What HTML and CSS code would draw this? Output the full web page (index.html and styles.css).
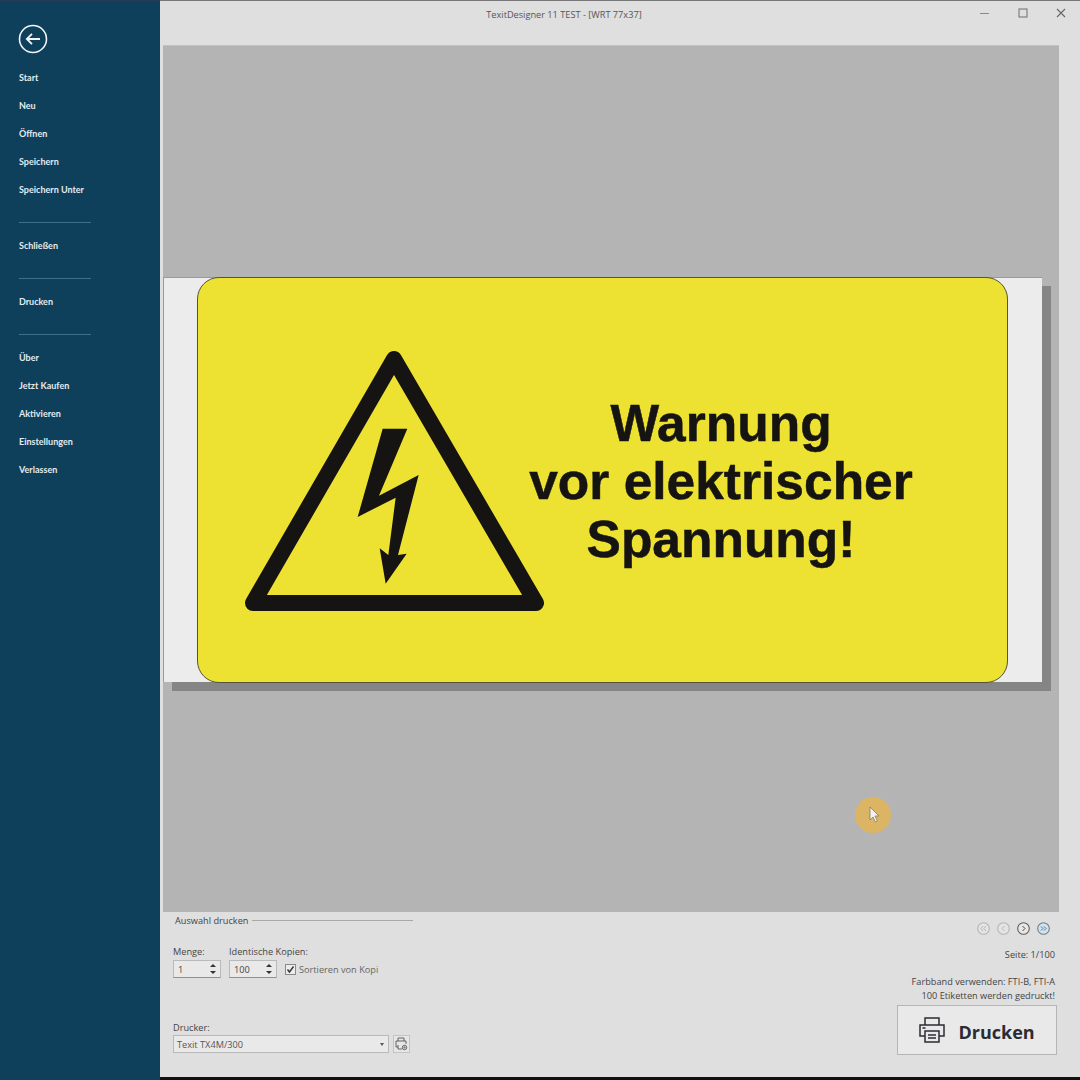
FILE: index.html
```html
<!DOCTYPE html>
<html lang="de">
<head>
<meta charset="utf-8">
<title>TextDesigner 11 TEST</title>
<link rel="stylesheet" href="styles.css">
</head>
<body>
<div class="app">
  <aside class="sidebar">
    <div class="back">
      <svg class="back-icon" width="30" height="30" viewBox="0 0 30 30"><circle cx="15" cy="15" r="13.5" fill="none" stroke="#f2f6f8" stroke-width="1.6"/><path d="M22 15H9M14 9.8 8.8 15l5.2 5.2" fill="none" stroke="#f2f6f8" stroke-width="1.8"/></svg>
    </div>
    <nav class="menu">
      <a class="item">Start</a>
      <a class="item">Neu</a>
      <a class="item">Öffnen</a>
      <a class="item">Speichern</a>
      <a class="item">Speichern Unter</a>
      <div class="sep"></div>
      <a class="item">Schließen</a>
      <div class="sep"></div>
      <a class="item">Drucken</a>
      <div class="sep"></div>
      <a class="item">Über</a>
      <a class="item">Jetzt Kaufen</a>
      <a class="item">Aktivieren</a>
      <a class="item">Einstellungen</a>
      <a class="item">Verlassen</a>
    </nav>
  </aside>
  <main class="main">
    <header class="titlebar">
      <div class="title">TexitDesigner 11 TEST - [WRT 77x37]</div>
      <div class="winbtns">
        <svg width="10" height="10" viewBox="0 0 10 10"><path d="M0 5.5h9" stroke="#8b8b8b" stroke-width="1"/></svg>
        <svg width="10" height="10" viewBox="0 0 10 10"><rect x="1" y="1" width="8" height="8" fill="none" stroke="#6f6f6f" stroke-width="1"/></svg>
        <svg width="10" height="10" viewBox="0 0 10 10"><path d="M1 1l8 8M9 1l-8 8" stroke="#666" stroke-width="1.1"/></svg>
      </div>
    </header>
    <section class="preview">
      <div class="label">
        <div class="sign">
          <svg class="triangle" width="330" height="290" viewBox="0 0 990 870">
            <path d="M492 57 918 789H69Z" fill="none" stroke="#151412" stroke-width="48" stroke-linejoin="round"/>
            <path d="M458 266H532L447 467 566 405 504 645 530 641 467 731 449 625 475 645 497 473 383 531Z" fill="#151412"/>
          </svg>
          <div class="warning">Warnung<br>vor elektrischer<br>Spannung!</div>
        </div>
      </div>
      <div class="cursor-mark">
        <svg width="12" height="18" viewBox="0 0 12 18"><path d="M1 1v13l3-3 2.4 5 2-1-2.4-5h4Z" fill="#f4f2ee" stroke="#77705f" stroke-width=".7"/></svg>
      </div>
    </section>
    <section class="panel">
      <div class="panel-left">
        <div class="legend"><span>Auswahl drucken</span><i class="legend-line"></i></div>
        <div class="fields">
          <div class="field">
            <label class="cap">Menge:</label>
            <div class="spin"><span>1</span><b class="arrows"><i class="up"></i><i class="down"></i></b></div>
          </div>
          <div class="field">
            <label class="cap">Identische Kopien:</label>
            <div class="spin"><span>100</span><b class="arrows"><i class="up"></i><i class="down"></i></b></div>
          </div>
          <div class="check">
            <svg width="11" height="11" viewBox="0 0 11 11"><rect x=".5" y=".5" width="10" height="10" fill="#ececec" stroke="#8a8a8a"/><path d="M2.5 5.5 4.5 8 8.5 2.5" fill="none" stroke="#333" stroke-width="1.4"/></svg>
            <span>Sortieren von Kopi</span>
          </div>
        </div>
        <div class="printer">
          <label class="cap">Drucker:</label>
          <div class="printer-row">
            <div class="select"><span>Texit TX4M/300</span><i class="caret"></i></div>
            <div class="printer-btn">
              <svg width="13" height="14" viewBox="0 0 13 14" fill="none" stroke="#555" stroke-width=".9"><path d="M3 4V1h6v3M3 10H1V4h10v3"/><path d="M3 8v4h4"/><circle cx="9.5" cy="10.5" r="2.2"/><circle cx="9.5" cy="10.5" r=".6"/></svg>
            </div>
          </div>
        </div>
      </div>
      <div class="panel-right">
        <div class="pager">
          <svg width="13" height="13" viewBox="0 0 13 13"><circle cx="6.5" cy="6.5" r="5.8" fill="#e4e4e4" stroke="#b5b5b5" stroke-width="1.1"/><path d="M6 4 3.8 6.5 6 9M9 4 6.8 6.5 9 9" fill="none" stroke="#b5b5b5"/></svg>
          <svg width="13" height="13" viewBox="0 0 13 13"><circle cx="6.5" cy="6.5" r="5.8" fill="#e4e4e4" stroke="#b5b5b5" stroke-width="1.1"/><path d="M7.5 4 5 6.5 7.5 9" fill="none" stroke="#b5b5b5"/></svg>
          <svg width="13" height="13" viewBox="0 0 13 13"><circle cx="6.5" cy="6.5" r="5.8" fill="#e8e8e8" stroke="#5e5e5e" stroke-width="1.1"/><path d="M5.5 4 8 6.5 5.5 9" fill="none" stroke="#444"/></svg>
          <svg width="13" height="13" viewBox="0 0 13 13"><circle cx="6.5" cy="6.5" r="5.8" fill="#d3e3ee" stroke="#6f7f8b" stroke-width="1.1"/><path d="M4 4.5 6 6.5 4 8.5M7 4.5 9 6.5 7 8.5" fill="none" stroke="#3f78a5"/></svg>
        </div>
        <div class="page-no">Seite: 1/100</div>
        <div class="info">Farbband verwenden: FTI-B, FTI-A<br>100 Etiketten werden gedruckt!</div>
        <button class="print">
          <svg width="26" height="26" viewBox="0 0 26 26" fill="none" stroke="#2b2b33" stroke-width="1.5"><path d="M6 8V1h14v7"/><path d="M6 19H1V8h24v11h-5"/><path d="M6 14h14v11H6z"/><path d="M9 18h8M9 21h8M3.5 11h3"/></svg>
          <span class="print-text">Drucken</span>
        </button>
      </div>
    </section>
    <div class="bottom-edge"></div>
  </main>
</div>
</body>
</html>
```
FILE: styles.css
```css
* { box-sizing: border-box; }
html, body { margin: 0; padding: 0; }
body { width: 1080px; height: 1080px; overflow: hidden; font-family: "Open Sans", "Noto Sans", sans-serif; }
.app { display: flex; width: 1080px; height: 1080px; }

.sidebar { width: 160px; flex: none; background: #0e3f5b; border-top: 1px solid #263a55; color: #e3ebef; }
.back { height: 62px; padding: 23px 0 0 18px; }
.back-icon { display: block; }
.menu { display: flex; flex-direction: column; }
.item { display: flex; align-items: center; height: 28px; padding-left: 19px; font-family: "Lato", "Open Sans", sans-serif; font-size: 9px; font-weight: 700; white-space: nowrap; }
.sep { height: 28px; padding-top: 19px; }
.sep::before { content: ""; display: block; width: 72px; height: 1px; margin-left: 19px; background: #3f6f87; }

.main { flex: 1; display: flex; flex-direction: column; background: #dfdfdf; border-top: 1px solid #777; }
.titlebar { height: 44px; flex: none; display: flex; justify-content: center; position: relative; padding: 8px 112px 0 0; }
.title { font-size: 9.2px; line-height: 12px; color: #555; }
.winbtns { position: absolute; top: 7px; right: 14px; display: flex; gap: 28px; }
.winbtns svg { display: block; }

.preview { flex: 1; position: relative; margin: 0 21px 0 3px; background: #b4b4b4; border-top: 1px solid #c2c2c2; padding-top: 231px; }
.label { width: 879px; height: 405px; padding-left: 34px; background: #ececec; box-shadow: 9px 9px 0 #858585, inset 1px 1px 0 #9a9a9a; }
.sign { width: 811px; height: 406px; display: flex; background: #ede232; border: 1px solid #55533a; border-radius: 22px; padding: 62px 0 0 32px; }
.triangle { display: block; flex: none; }
.warning { width: 400px; margin: 54px 0 0 -39px; text-align: center; font-family: "Liberation Sans", Arial, sans-serif; font-weight: 700; font-size: 51.5px; line-height: 58px; color: #151412; white-space: nowrap; -webkit-text-stroke: .5px #151412; }
.cursor-mark { position: absolute; left: 692px; top: 751px; width: 36px; height: 36px; border-radius: 50%; background: #dcb564; padding: 9px 0 0 14px; }
.cursor-mark svg { display: block; }

.panel { height: 165px; flex: none; display: flex; justify-content: space-between; padding: 0 23px 0 13px; color: #444; font-size: 9.2px; }
.panel-left { width: 240px; }
.legend { height: 16px; display: flex; align-items: center; gap: 4px; padding-left: 2px; white-space: nowrap; }
.legend-line { flex: 1; height: 1px; background: #a8a8a8; }
.fields { display: flex; align-items: flex-end; gap: 8px; margin-top: 17px; }
.field { width: 48px; white-space: nowrap; }
.cap { display: block; height: 14px; line-height: 14px; margin-bottom: 1px; color: #444; }
.spin { height: 18px; display: flex; align-items: center; justify-content: space-between; padding: 0 4px; background: #e9e9e9; border: 1px solid #a9a9a9; border-color: #b9b9b9 #b9b9b9 #8f8f8f; }
.arrows { display: flex; flex-direction: column; gap: 4px; }
.up, .down { display: block; width: 0; height: 0; border-left: 3px solid transparent; border-right: 3px solid transparent; }
.up { border-bottom: 3px solid #333; }
.down { border-top: 3px solid #333; }
.check { display: flex; align-items: center; gap: 3px; height: 18px; color: #666; white-space: nowrap; }
.check svg { display: block; }
.printer { margin-top: 43px; }
.printer .cap { margin-bottom: 0; }
.printer-row { display: flex; gap: 4px; }
.select { width: 216px; height: 18px; display: flex; align-items: center; justify-content: space-between; padding: 0 4px 0 3px; background: #e9e9e9; border: 1px solid #b9b9b9; color: #555; }
.caret { width: 0; height: 0; border-left: 2.5px solid transparent; border-right: 2.5px solid transparent; border-top: 3px solid #555; }
.printer-btn { width: 17px; height: 18px; display: flex; align-items: center; justify-content: center; border: 1px solid #c4c4c4; background: #e6e6e6; }

.panel-right { display: flex; flex-direction: column; align-items: flex-end; }
.pager { display: flex; gap: 7px; margin: 10px 7px 0 0; }
.pager svg { display: block; }
.page-no { height: 14px; line-height: 14px; margin: 13px 2px 0 0; }
.info { margin: 13px 2px 0 0; line-height: 14px; text-align: right; }
.print { width: 160px; height: 50px; margin-top: 2px; display: flex; align-items: center; justify-content: center; gap: 13px; padding: 0; background: #e9e9e9; border: 1px solid #b5b5b5; color: #2b2b33; font-family: "Open Sans", sans-serif; font-weight: 700; font-size: 18px; }
.print svg { display: block; }
.print-text { padding-top: 3px; }
.bottom-edge { height: 3px; flex: none; background: #111; }
```
